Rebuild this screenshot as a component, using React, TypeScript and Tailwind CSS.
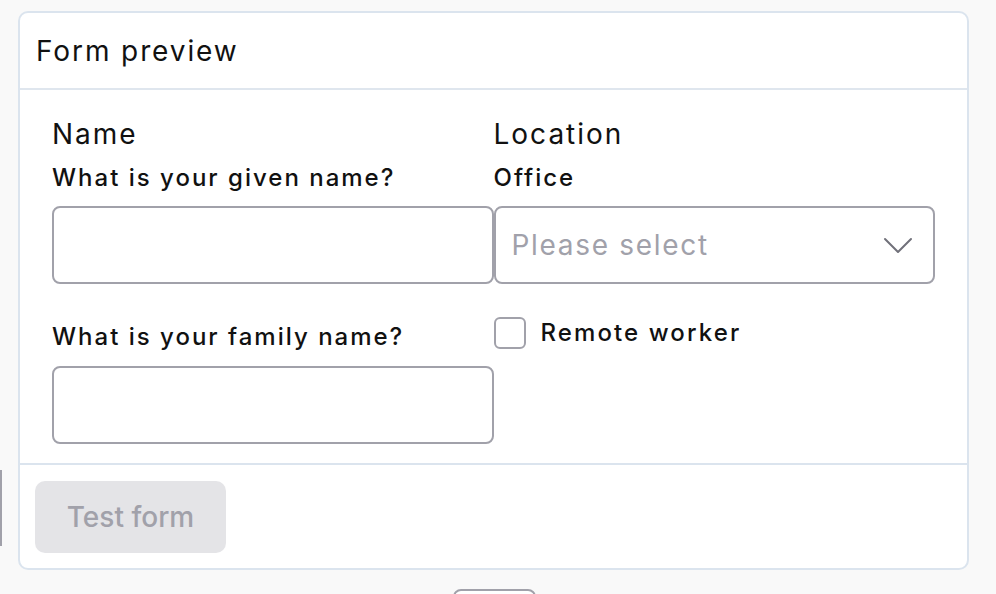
export default function App() {
  return (
    <div className="relative h-[594px] w-[996px] overflow-hidden bg-[#f9f9f9] font-['Inter',sans-serif] text-[#111]">
      {/* edge of something left of the card */}
      <div className="absolute left-0 top-[470px] h-[76px] w-[2px] bg-[#a1a1aa]" />
      {/* edge of something below the card */}
      <div className="absolute left-[453px] top-[589px] h-[20px] w-[83px] rounded-t-[8px] border-2 border-[#a1a1aa] bg-white" />

      <div className="ml-[18px] mt-[11px] w-[951px] rounded-[10px] border-2 border-[#dbe4ee] bg-white">
        <div className="flex h-[77px] items-center border-b-2 border-[#dfe6ee] pl-[16px] text-[28px] leading-[36px] tracking-[1.9px]">
          Form preview
        </div>

        <div className="grid grid-cols-2 px-8 pb-[19px] pt-[26px]">
          <div className="flex flex-col">
            <div className="text-[28px] leading-[36px] tracking-[2px]">Name</div>
            <div className="mt-[10px] text-[24px] font-[480] leading-[32px] tracking-[2px]">What is your given name?</div>
            <div className="mt-[12px] h-[78px] w-[442px] rounded-[8px] border-2 border-[#a1a1aa]" />
            <div className="mt-[37px] text-[24px] font-[480] leading-[32px] tracking-[2px]">What is your family name?</div>
            <div className="mt-[13px] h-[78px] w-[442px] rounded-[8px] border-2 border-[#a1a1aa]" />
          </div>

          <div className="flex flex-col">
            <div className="text-[28px] leading-[36px] tracking-[2px]">Location</div>
            <div className="mt-[10px] text-[24px] font-[480] leading-[32px] tracking-[2px]">Office</div>
            <div className="mt-[12px] flex h-[78px] items-center justify-between rounded-[8px] border-2 border-[#a1a1aa] pl-[16px] pr-[20px]">
              <span className="text-[28px] leading-[36px] tracking-[1.7px] text-[#a1a1aa]">Please select</span>
              <svg width="30" height="18" viewBox="0 0 30 18" fill="none" stroke="#71717a" strokeWidth="2" strokeLinecap="round" strokeLinejoin="round">
                <path d="M2 3l13 13L28 3" />
              </svg>
            </div>
            <label className="mt-[33px] flex items-center gap-[15px]">
              <span className="h-[32px] w-[32px] rounded-[6px] border-2 border-[#a1a1aa] bg-white" />
              <span className="text-[24px] font-[480] leading-[32px] tracking-[2.1px]">Remote worker</span>
            </label>
          </div>
        </div>

        <div className="border-t-2 border-[#dbe4ee] pb-[15px] pl-[15px] pt-[16px]">
          <button className="h-[72px] w-[191px] rounded-[10px] bg-[#e4e4e7] text-[28px] font-medium text-[#a1a1aa]">
            Test form
          </button>
        </div>
      </div>
    </div>
  );
}
